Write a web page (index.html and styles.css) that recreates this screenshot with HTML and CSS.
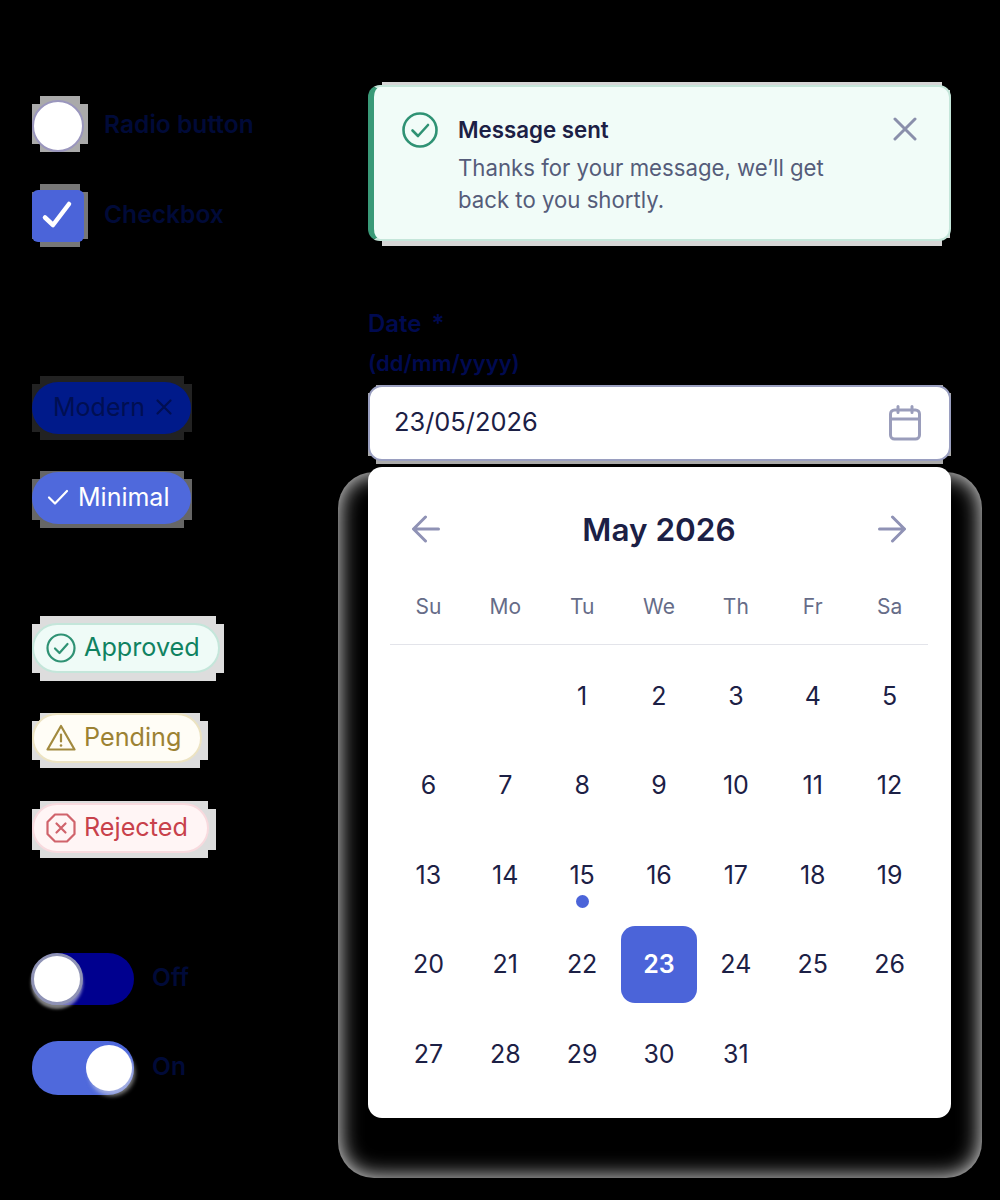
FILE: index.html
```html
<!DOCTYPE html>
<html lang="en">
<head>
    <meta charset="UTF-8">
    <meta name="viewport" content="width=device-width, initial-scale=1.0">
    <title>Form components</title>
    <link rel="stylesheet" href="styles.css">
</head>
<body>

    <div class="page">
        <div class="left">
            <div class="option">
                <span class="radio halo"></span>
                <span class="option-label">Radio button</span>
            </div>
            <div class="option option-check">
                <span class="checkbox halo">
                    <svg width="52" height="52" viewBox="0 0 52 52" fill="none"><path d="M13 27.5l8 7.5 16-21" stroke="#fff" stroke-width="4.5" stroke-linecap="round" stroke-linejoin="round"/></svg>
                </span>
                <span class="option-label">Checkbox</span>
            </div>

            <div class="chip chip-modern halo">
                <span>Modern</span>
                <svg width="18" height="18" viewBox="0 0 18 18" fill="none"><path d="M2.5 2.5l13 13M15.5 2.5l-13 13" stroke="#000f52" stroke-width="2.2" stroke-linecap="round"/></svg>
            </div>
            <div class="chip chip-minimal halo">
                <svg width="22" height="18" viewBox="0 0 22 18" fill="none"><path d="M2 9.5l6 6L20 3" stroke="#fff" stroke-width="2.2" stroke-linecap="round" stroke-linejoin="round"/></svg>
                <span>Minimal</span>
            </div>

            <div class="status status-approved halo">
                <svg width="30" height="30" viewBox="0 0 30 30" fill="none"><circle cx="15" cy="15" r="13.5" stroke="#2f9274" stroke-width="2.2"/><path d="M9 15.5l4.500 4.500L21.500 11" stroke="#2f9274" stroke-width="2.2" stroke-linecap="round" stroke-linejoin="round"/></svg>
                <span>Approved</span>
            </div>
            <div class="status status-pending halo">
                <svg width="30" height="30" viewBox="0 0 30 30" fill="none"><path d="M15 3L28.500 26.500H1.500Z" stroke="#a28a3f" stroke-width="2.2" stroke-linejoin="round"/><path d="M15 11.500v7" stroke="#a28a3f" stroke-width="2.2" stroke-linecap="round"/><circle cx="15" cy="22.500" r="1.300" fill="#a28a3f"/></svg>
                <span>Pending</span>
            </div>
            <div class="status status-rejected halo">
                <svg width="30" height="30" viewBox="0 0 30 30" fill="none"><path d="M9 1.500h12L28.500 9v12L21 28.500H9L1.500 21V9Z" stroke="#d0636b" stroke-width="2.2" stroke-linejoin="round"/><path d="M10.500 10.500l9 9M19.500 10.500l-9 9" stroke="#d0636b" stroke-width="2.2" stroke-linecap="round"/></svg>
                <span>Rejected</span>
            </div>

            <div class="toggle-row toggle-row-off">
                <span class="toggle toggle-off"><span class="knob"></span></span>
                <span class="option-label">Off</span>
            </div>
            <div class="toggle-row toggle-row-on">
                <span class="toggle toggle-on"><span class="knob"></span></span>
                <span class="option-label">On</span>
            </div>
        </div>

        <div class="right">
            <div class="alert halo">
                <svg class="alert-icon" width="36" height="36" viewBox="0 0 36 36" fill="none"><circle cx="18" cy="18" r="16.500" stroke="#2f9274" stroke-width="2.600"/><path d="M10.500 18.500l5.500 5.500 10-11" stroke="#2f9274" stroke-width="2.600" stroke-linecap="round" stroke-linejoin="round"/></svg>
                <div class="alert-text">
                    <div class="alert-title">Message sent</div>
                    <div class="alert-body">Thanks for your message, we’ll get back to you shortly.</div>
                </div>
                <svg class="alert-close" width="24" height="24" viewBox="0 0 24 24" fill="none"><path d="M2 2l20 20M22 2L2 22" stroke="#8a8fab" stroke-width="3" stroke-linecap="round"/></svg>
            </div>

            <div class="date-label">Date <span class="star">*</span></div>
            <div class="date-hint">(dd/mm/yyyy)</div>
            <div class="date-input halo">
                <span>23/05/2026</span>
                <svg width="32" height="36" viewBox="0 0 32 36" fill="none"><rect x="1.500" y="5" width="29" height="29" rx="4" stroke="#9a9dbb" stroke-width="3"/><path d="M1.500 14h29M9 1.500v6M23 1.500v6" stroke="#9a9dbb" stroke-width="3" stroke-linecap="round"/></svg>
            </div>

            <div class="calendar">
                <div class="cal-head">
                    <svg width="28" height="28" viewBox="0 0 28 28" fill="none"><path d="M26.500 14H2M13.500 2L1.500 14l12 12" stroke="#8f92b5" stroke-width="3" stroke-linecap="round" stroke-linejoin="round"/></svg>
                    <span class="cal-title">May 2026</span>
                    <svg width="28" height="28" viewBox="0 0 28 28" fill="none"><path d="M1.500 14H26M14.500 2l12 12-12 12" stroke="#8f92b5" stroke-width="3" stroke-linecap="round" stroke-linejoin="round"/></svg>
                </div>
                <div class="cal-week">
                    <span>Su</span><span>Mo</span><span>Tu</span><span>We</span><span>Th</span><span>Fr</span><span>Sa</span>
                </div>
                <div class="cal-days">
                    <span></span><span></span>
                    <span>1</span><span>2</span><span>3</span><span>4</span><span>5</span>
                    <span>6</span><span>7</span><span>8</span><span>9</span><span>10</span><span>11</span><span>12</span>
                    <span>13</span><span>14</span><span class="today">15</span><span>16</span><span>17</span><span>18</span><span>19</span>
                    <span>20</span><span>21</span><span>22</span><span class="selected">23</span><span>24</span><span>25</span><span>26</span>
                    <span>27</span><span>28</span><span>29</span><span>30</span><span>31</span>
                </div>
            </div>
        </div>
    </div>

</body>
</html>
```

FILE: styles.css
```css
html, body {
    margin: 0;
    padding: 0;
    background-color: #000;
}
body {
    font-family: Inter, "Liberation Sans", sans-serif;
    color: #1c2045;
}
.page {
    isolation: isolate;
    display: flex;
    width: 1000px;
    height: 1200px;
    overflow: hidden;
    background-color: #000;
}
.left {
    width: 368px;
    padding: 100px 0 0 32px;
    box-sizing: border-box;
}
.right {
    width: 583px;
}

/* leftover grey blocks round each control */
.halo {
    position: relative;
}
.halo::before {
    content: "";
    position: absolute;
    z-index: -1;
    background-color: #999;
    clip-path: polygon(8px 0, calc(100% - 8px) 0, calc(100% - 8px) 8px, 100% 8px, 100% calc(100% - 8px), calc(100% - 8px) calc(100% - 8px), calc(100% - 8px) 100%, 8px 100%, 8px calc(100% - 8px), 0 calc(100% - 8px), 0 8px, 8px 8px);
}

.option {
    display: flex;
    align-items: center;
    gap: 20px;
    height: 52px;
}
.option-check {
    margin-top: 38px;
}
.option-label {
    padding-bottom: 4px;
    font-size: 24.600px;
    font-weight: 600;
    color: #000a38;
}
.radio {
    width: 52px;
    height: 52px;
    box-sizing: border-box;
    border: 2px solid #9a96bd;
    border-radius: 50%;
    background-color: #fff;
}
.radio::before {
    inset: -6px -6px -2px -2px;
    background-color: #aaa;
}
.checkbox {
    width: 52px;
    height: 52px;
    border-radius: 6px;
    background-color: #4b64d9;
}
.checkbox::before {
    inset: -6px -4px -5px 0;
    background-color: #777;
}
.checkbox svg {
    display: block;
}

.chip {
    display: flex;
    align-items: center;
    box-sizing: border-box;
    width: 159px;
    height: 52px;
    padding-bottom: 2px;
    border-radius: 26px;
    font-size: 25px;
}
.chip-modern {
    margin-top: 140px;
    padding-left: 21px;
    gap: 10px;
    background-color: #001a8a;
    color: #000f52;
}
.chip-modern::before {
    inset: -6px -1px -6px 0;
    background-color: #222;
}
.chip-minimal {
    margin-top: 38px;
    padding-left: 15px;
    gap: 9px;
    background-color: #4f69dc;
    color: #fff;
}
.chip-minimal::before {
    inset: -1px -1px -4px 0;
    background-color: #666;
}

.status {
    display: flex;
    align-items: center;
    gap: 8px;
    box-sizing: border-box;
    height: 50px;
    padding-left: 12px;
    border: 2px solid;
    border-radius: 25px;
    font-size: 25.200px;
}
.status span {
    padding-bottom: 2px;
}
.status::before {
    background-color: #ddd;
}
.status-approved {
    width: 188px;
    margin-top: 99px;
    background-color: #effbf7;
    border-color: #c4e6da;
    color: #0f8261;
}
.status-approved::before {
    inset: -9px -6px -10px -2px;
}
.status-pending {
    width: 170px;
    margin-top: 40px;
    background-color: #fffdf6;
    border-color: #ece3c2;
    color: #9c8233;
}
.status-pending::before {
    inset: -2px -8px -7px -2px;
}
.status-rejected {
    width: 177px;
    margin-top: 40px;
    background-color: #fff5f5;
    border-color: #f8dade;
    color: #c8414b;
}
.status-rejected::before {
    inset: -4px -9px -7px -2px;
}

.toggle-row {
    display: flex;
    align-items: center;
    gap: 18px;
}
.toggle-row-off {
    margin-top: 100px;
}
.toggle-row-on {
    margin-top: 36px;
}
.toggle {
    position: relative;
    display: block;
    width: 102px;
    height: 52px;
    border-radius: 26px;
}
.toggle-off {
    background-color: #00008f;
}
.toggle-on {
    height: 54px;
    background-color: #4f69dc;
}
.knob {
    position: absolute;
    box-sizing: border-box;
    border-radius: 50%;
    background-color: #fff;
}
.toggle-off .knob {
    top: 0;
    left: -1px;
    width: 52px;
    height: 52px;
    border: 3px solid #8f93b5;
    box-shadow: 0 4px 3px rgba(230, 230, 230, 0.55);
}
.toggle-on .knob {
    top: 4px;
    right: 2px;
    width: 46px;
    height: 46px;
    box-shadow: 3px 5px 4px rgba(230, 230, 230, 0.55);
}

.alert {
    display: flex;
    box-sizing: border-box;
    height: 156px;
    margin-top: 85px;
    padding: 26px 32px 0 28px;
    border: 2px solid #c5e6da;
    border-left: 6px solid #3a9a78;
    border-radius: 12px;
    background-color: #f1fcf8;
}
.alert::before {
    inset: -5px -1px -7px 0;
    background-color: #d6d6d6;
}
.alert-icon {
    flex: none;
    margin-top: -1px;
}
.alert-text {
    flex: 1;
    margin: 0 0 0 20px;
}
.alert-title {
    font-size: 22.300px;
    font-weight: 600;
    line-height: 34px;
}
.alert-body {
    width: 390px;
    font-size: 22.200px;
    line-height: 32px;
    color: #555c7a;
    margin-top: 5px;
}
.alert-close {
    flex: none;
    margin-top: 4px;
}

.date-label {
    margin-top: 68px;
    font-size: 24px;
    font-weight: 600;
    line-height: 30px;
    color: #000a50;
}
.star {
    margin-left: 4px;
}
.date-hint {
    margin-top: 9px;
    font-size: 22px;
    font-weight: 600;
    line-height: 30px;
    color: #000a50;
}
.date-input {
    display: flex;
    align-items: center;
    justify-content: space-between;
    box-sizing: border-box;
    height: 76px;
    margin-top: 7px;
    padding: 0 28px 0 24px;
    border: 2px solid #9a9fc0;
    border-radius: 14px;
    background-color: #fff;
    font-size: 25.400px;
}
.date-input span {
    padding-bottom: 3px;
}
.date-input::before {
    inset: -2px -2px -5px -2px;
    background-color: #aaa;
}

.calendar {
    position: relative;
    box-sizing: border-box;
    height: 651px;
    margin-top: 6px;
    padding: 0 23px 0 22px;
    border-radius: 14px;
    background-color: #fff;
}
/* noisy shadow left behind the card */
.calendar::before {
    content: "";
    position: absolute;
    z-index: -1;
    inset: 5px -31px -60px -30px;
    border-radius: 36px;
    background-color: #000;
    box-shadow: inset 0 0 22px rgba(255, 255, 255, 0.95);
}
.cal-head {
    display: flex;
    align-items: center;
    justify-content: space-between;
    height: 124px;
    padding: 0 22px;
}
.cal-title {
    font-size: 31.500px;
    font-weight: 600;
}
.cal-week {
    display: grid;
    grid-template-columns: repeat(7, 1fr);
    height: 53px;
    border-bottom: 1px solid #e3e4ea;
    font-size: 21px;
    text-align: center;
    color: #666c88;
    line-height: 32px;
}
.cal-days {
    display: grid;
    grid-template-columns: repeat(7, 1fr);
    grid-auto-rows: 76.800px;
    row-gap: 12.700px;
    margin-top: 12.500px;
    font-size: 25px;
}
.cal-days span {
    display: flex;
    align-items: center;
    justify-content: center;
    position: relative;
}
.selected {
    border-radius: 14px;
    background-color: #4b64d9;
    color: #fff;
    font-weight: 600;
}
.today::after {
    content: "";
    position: absolute;
    left: 50%;
    top: 59px;
    width: 13px;
    height: 13px;
    margin-left: -6.500px;
    border-radius: 50%;
    background-color: #4b64d9;
}
```
